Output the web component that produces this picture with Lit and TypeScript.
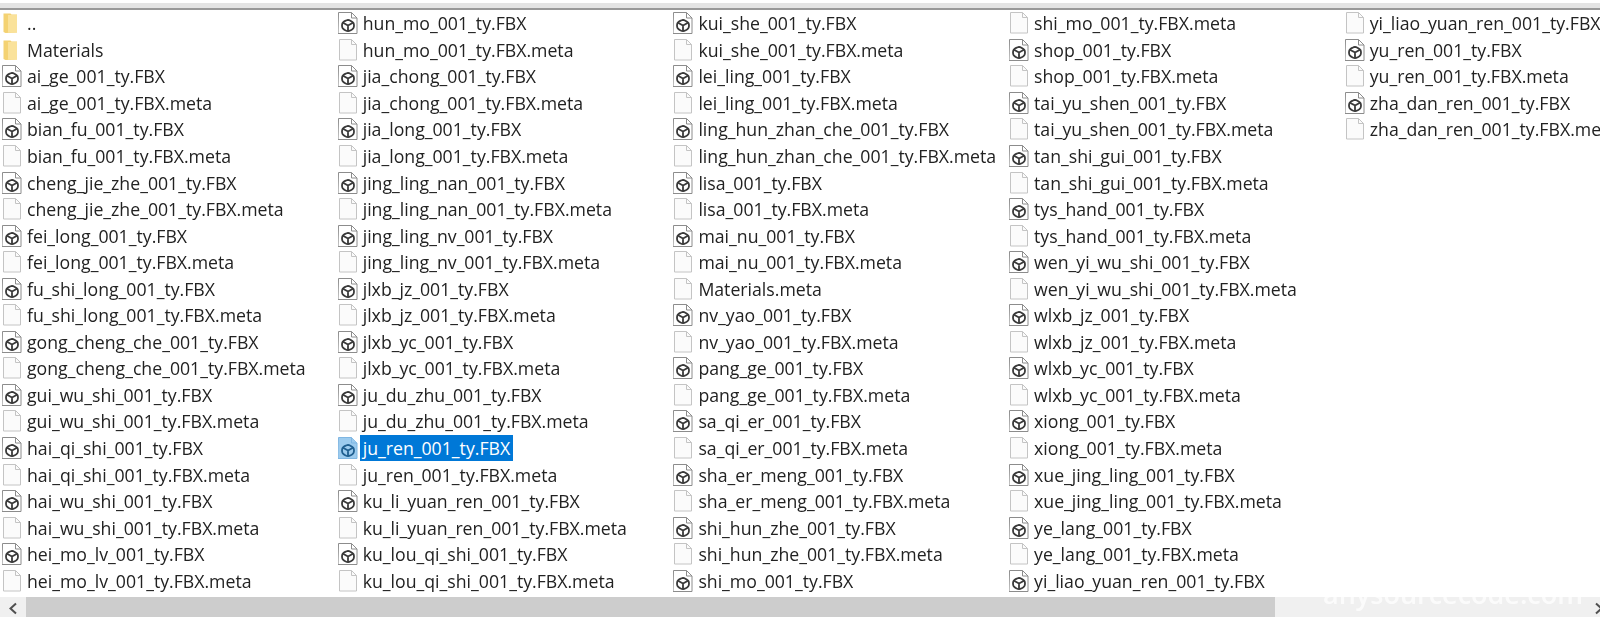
import { LitElement, html, css, svg } from "lit";
import { customElement } from "lit/decorators.js";

const bases1 = ["ai_ge","bian_fu","cheng_jie_zhe","fei_long","fu_shi_long","gong_cheng_che","gui_wu_shi","hai_qi_shi","hai_wu_shi","hei_mo_lv","hun_mo","jia_chong","jia_long","jing_ling_nan","jing_ling_nv","jlxb_jz","jlxb_yc","ju_du_zhu","ju_ren","ku_li_yuan_ren","ku_lou_qi_shi","kui_she","lei_ling","ling_hun_zhan_che","lisa","mai_nu"];
const bases2 = ["nv_yao","pang_ge","sa_qi_er","sha_er_meng","shi_hun_zhe","shi_mo","shop","tai_yu_shen","tan_shi_gui","tys_hand","wen_yi_wu_shi","wlxb_jz","wlxb_yc","xiong","xue_jing_ling","ye_lang","yi_liao_yuan_ren","yu_ren","zha_dan_ren"];
const files: string[] = ["..", "Materials"];
for (const b of bases1) files.push(`${b}_001_ty.FBX`, `${b}_001_ty.FBX.meta`);
files.push("Materials.meta");
for (const b of bases2) files.push(`${b}_001_ty.FBX`, `${b}_001_ty.FBX.meta`);

const folder = svg`<svg class="ic" viewBox="0 0 20 22"><path d="M1.500 1.500h7l1 1h5.500v18l-11.500 0.500-2-1z" fill="#f4d272"/><path d="M6 3h9v17.500l-9 0.300z" fill="#fae29a"/></svg>`;
const page = svg`<svg class="ic" viewBox="0 0 20 22"><path d="M1.500 0.500h12l5 5v15.500h-17z" fill="#fbfbfb" stroke="#c4c4c4"/><path d="M13.500 0.500v5h5" fill="none" stroke="#c4c4c4"/></svg>`;
const model = svg`<svg class="ic" viewBox="0 0 20 22"><path class="sheet" d="M0.500 0.500h13l5.500 5.500v15.500h-19z" fill="#fff" stroke="#8c8c8c"/><path class="sheet" d="M13.500 0.500v5.500h5.500" fill="none" stroke="#8c8c8c"/><path class="glyph" d="M10 7.800Q11 7.800 12.800 8.900T15.300 10.800Q16 12 16 13.500T15.300 16.200Q14.500 17.400 12.800 18.200T10 19.200Q9 19.200 7.200 18.200T4.700 16.200Q4 15 4 13.500T4.700 10.800Q5.500 9.800 7.200 8.900T10 7.800z" fill="none" stroke="#3a3a3a" stroke-width="1.800"/><path class="glyph" d="M5 10.700l5 2.800 5-2.800M10 13.500v5.500" fill="none" stroke="#3a3a3a" stroke-width="1.800"/></svg>`;

@customElement("app-root")
export class AppRoot extends LitElement {
  static styles = css`
    :host { display: block; position: relative; width: 1600px; height: 617px; background: #fff; overflow: hidden; font-family: "Open Sans", "Noto Sans", sans-serif; color: #222; }
    .top { height: 10px; box-sizing: border-box; border-bottom: 2px solid #999; background: linear-gradient(#fff 0 3px, #e4e4e4 3px); }
    .list { height: 587px; box-sizing: border-box; display: grid; grid-template-rows: repeat(22, 26.55px); grid-auto-flow: column; grid-auto-columns: 335.700px; overflow: hidden; filter: blur(0.35px); }
    .row { display: flex; align-items: center; gap: 2.500px; padding-left: 2px; font-size: 17.700px; white-space: nowrap; min-width: 0; }
    .ic { width: 20px; height: 22px; flex: none; }
    .name { padding: 0 3px 0 2.500px; line-height: 26px; }
    .sel .sheet { fill: #9ccbee; stroke: #7fb6e2; }
    .sel .glyph { stroke: #1f5f90; }
    .sel .name { background: #0078d7; color: #fff; }
    .bar { height: 20px; background: #f0f0f0; display: flex; align-items: stretch; }
    .btn { width: 26px; display: flex; align-items: center; justify-content: center; flex: none; padding-top: 3px; box-sizing: border-box; }
    .btn.end { width: 5px; justify-content: flex-start; overflow: hidden; }
    .btn svg { width: 10px; height: 13px; flex: none; }
    .thumb { width: 1249px; background: #cdcdcd; }
    .gap { flex: 1; }
    .mark { position: absolute; left: 1323px; top: 574px; font-size: 27px; line-height: 40px; font-weight: 600; color: rgba(255,255,255,0.75); white-space: nowrap; }
  `;
  render() {
    return html`
      <div class="top"></div>
      <div class="list">
        ${files.map((f) => html`<div class="row ${f === "ju_ren_001_ty.FBX" ? "sel" : ""}">
          ${f === ".." || f === "Materials" ? folder : f.endsWith(".meta") ? page : model}
          <span class="name">${f}</span>
        </div>`)}
      </div>
      <div class="bar">
        <div class="btn"><svg viewBox="0 0 10 13"><path d="M8 1.500L2.500 6.500l5.500 5" fill="none" stroke="#505050" stroke-width="2"/></svg></div>
        <div class="thumb"></div>
        <div class="gap"></div>
        <div class="btn end"><svg viewBox="0 0 10 13"><path d="M1 1.500l5.500 5-5.500 5" fill="none" stroke="#505050" stroke-width="2"/></svg></div>
      </div>
      <div class="mark">anysourcecode.com</div>
    `;
  }
}
